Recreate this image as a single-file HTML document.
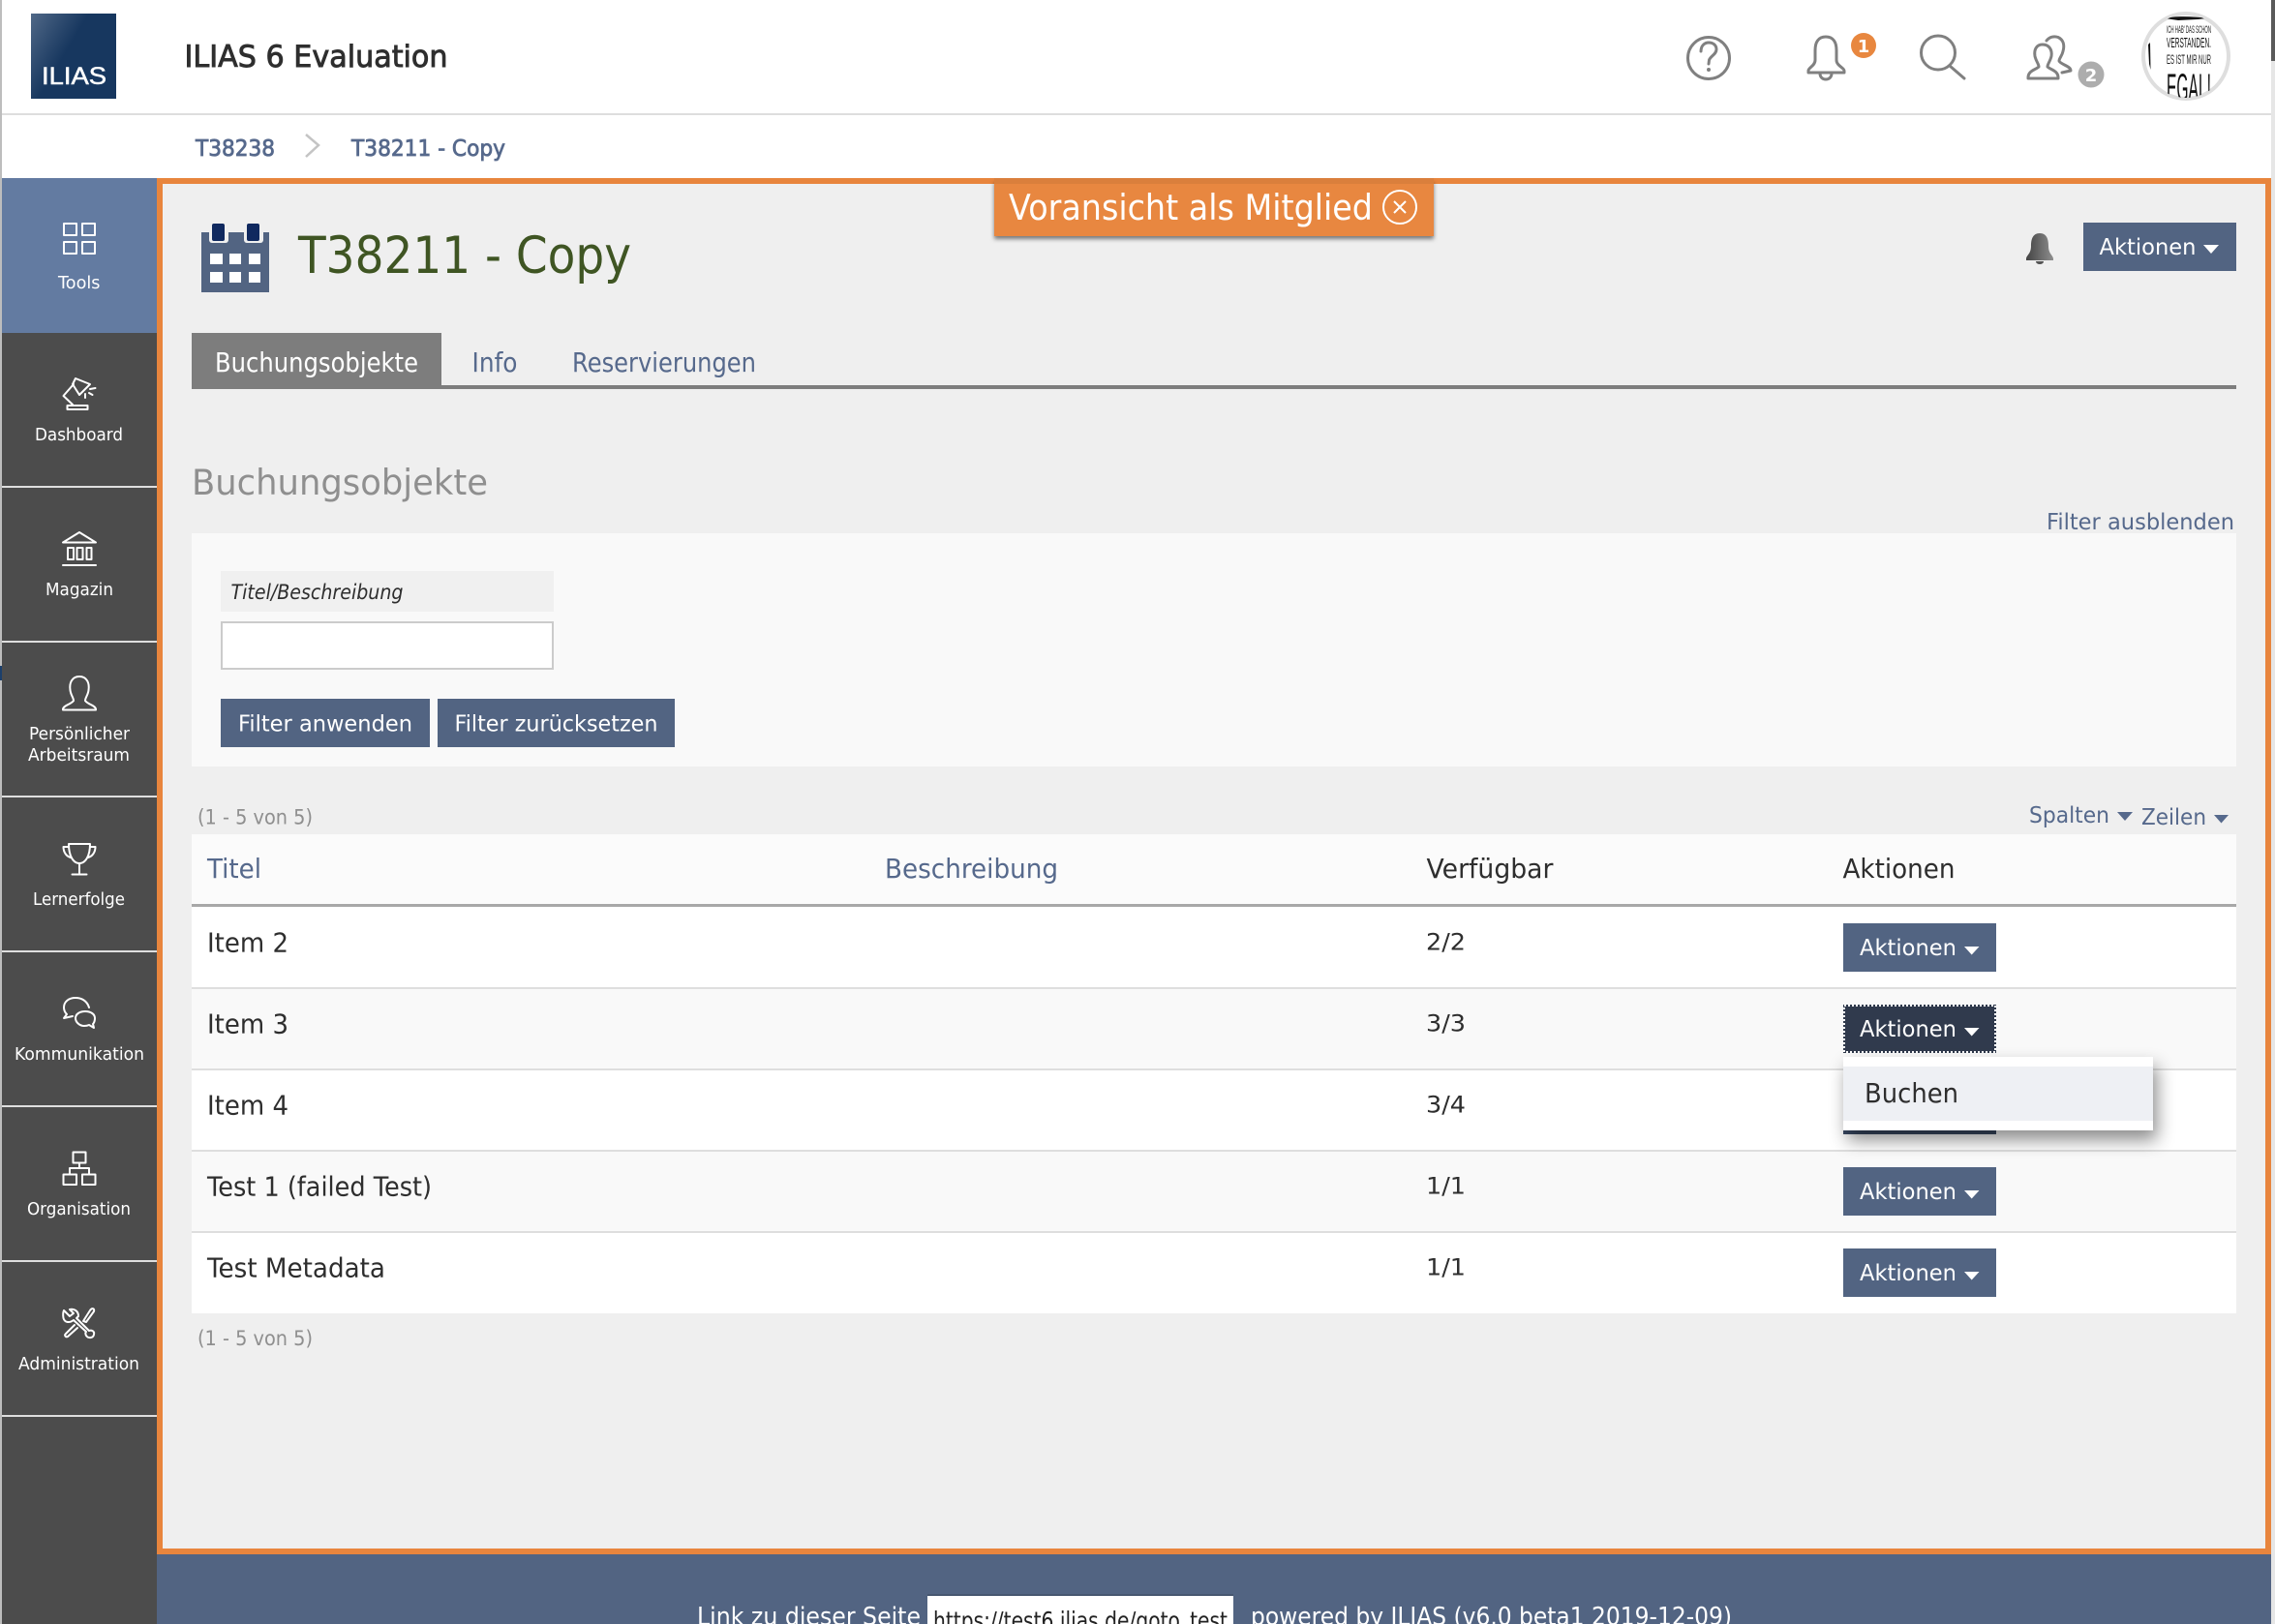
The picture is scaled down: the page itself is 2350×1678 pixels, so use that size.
<!DOCTYPE html>
<html lang="de"><head><meta charset="utf-8"><title>T38211 - Copy</title>
<style>
html,body{margin:0;padding:0;background:#fff;width:2350px;height:1678px;overflow:hidden}
svg{display:block}
text{font-family:"DejaVu Sans","Liberation Sans",sans-serif}
.nav{fill:#fff;font-size:17.5px}
.lnk{fill:#56698c;font-size:23.5px}
.btn{fill:#fff;font-size:23px}
.cell{fill:#2e2e2e;font-size:27.5px}
.val{fill:#2e2e2e;font-size:24px}
.ic{fill:none;stroke:#fff;stroke-width:2;stroke-linejoin:round;stroke-linecap:round}
.hd{fill:none;stroke:#808080;stroke-width:3;stroke-linejoin:round;stroke-linecap:round}
</style></head><body>
<svg xmlns="http://www.w3.org/2000/svg" width="2350" height="1678" viewBox="0 0 2350 1678">
<defs>
<linearGradient id="lg" x1="0" y1="0" x2="1" y2="0.6"><stop offset="0" stop-color="#506887"/><stop offset=".5" stop-color="#17375f"/><stop offset="1" stop-color="#17375f"/></linearGradient>
<linearGradient id="bg" x1="0" y1="0" x2="1" y2="0"><stop offset="0" stop-color="#444"/><stop offset="1" stop-color="#8e8e8e"/></linearGradient>
<filter id="ds" x="-20%" y="-40%" width="140%" height="200%"><feDropShadow dx="4" dy="10" stdDeviation="9" flood-color="#000" flood-opacity=".45"/></filter>
<filter id="ds2" x="-5%" y="-20%" width="110%" height="150%"><feDropShadow dx="0" dy="3" stdDeviation="2" flood-color="#000" flood-opacity=".5"/></filter>
<clipPath id="av"><circle cx="2258" cy="58" r="43"/></clipPath>
</defs>

<rect width="2350" height="1678" fill="#fff"/>
<rect x="0" y="0" width="2" height="1678" fill="#bdbdbd"/>

<!-- header -->
<rect x="32" y="14" width="88" height="88" fill="url(#lg)"/>
<text x="43" y="87" textLength="67" lengthAdjust="spacingAndGlyphs" style="font-family:'Liberation Sans',sans-serif;font-size:25px" fill="#fff" stroke="#fff" stroke-width=".5">ILIAS</text>
<text x="190.500" y="69" textLength="272" lengthAdjust="spacingAndGlyphs" font-size="31" fill="#2e2e2e" stroke="#2e2e2e" stroke-width=".9">ILIAS 6 Evaluation</text>
<rect x="2" y="117" width="2344" height="2" fill="#dedede"/>

<circle class="hd" cx="1765" cy="60" r="21.5"/>
<path class="hd" d="M1757 53C1757 47 1761 44 1765 44C1770 44 1773 47 1773 51C1773 56 1767 58 1765.500 62L1765 66"/>
<circle cx="1765" cy="72" r="2" fill="#808080"/>

<path class="hd" d="M1886 38C1878 38 1875 44 1875 52L1875 62C1875 68 1868 70 1868 73L1868 75L1905 75L1905 73C1905 70 1897 68 1897 62L1897 52C1897 44 1894 38 1886 38Z"/>
<path class="hd" d="M1880 76C1880 84 1892 84 1892 76"/>
<circle cx="1925" cy="47" r="13" fill="#e8873f"/>
<text x="1925" y="54" text-anchor="middle" font-size="18" font-weight="bold" fill="#fff">1</text>

<circle class="hd" cx="2002" cy="54.500" r="17.500"/>
<path class="hd" d="M2014 68L2029 81"/>

<path class="hd" d="M2110 46C2103 46 2101 52 2102 58C2103 63 2106 66 2106 69C2103 72 2095 73 2095 80L2095 81L2126 81L2126 80C2126 73 2118 72 2115 69C2115 66 2118 63 2119 58C2120 52 2117 46 2110 46Z"/>
<path class="hd" d="M2114 42C2117 38 2122 37 2126 38.500C2131 41 2133 46 2131 53C2130 58 2127 60 2127 63C2129 67 2139 68 2139 73L2130 75"/>
<circle cx="2160" cy="77" r="13.500" fill="#adadad"/>
<text x="2160" y="84" text-anchor="middle" font-size="18" font-weight="bold" fill="#fff">2</text>

<circle cx="2258" cy="58" r="44" fill="#fff" stroke="#dedede" stroke-width="4"/>
<g clip-path="url(#av)" fill="#111">
<path d="M2236 19C2245 16.500 2265 16.500 2280 19L2270 20L2250 21Z"/>
<path d="M2219 46L2221 44L2221.500 72L2220 66Z"/>
<text x="2238" y="34" textLength="46" lengthAdjust="spacingAndGlyphs" style="font-family:'Liberation Sans',sans-serif" font-size="11" fill="#222">ICH HAB' DAS SCHON</text>
<text x="2238" y="49" textLength="46" lengthAdjust="spacingAndGlyphs" style="font-family:'Liberation Sans',sans-serif" font-size="15">VERSTANDEN.</text>
<text x="2238" y="66" textLength="46" lengthAdjust="spacingAndGlyphs" style="font-family:'Liberation Sans',sans-serif" font-size="14" fill="#222">ES IST MIR NUR</text>
<text x="2238" y="104" textLength="46" lengthAdjust="spacingAndGlyphs" style="font-family:'Liberation Sans',sans-serif" font-size="40">EGAL!</text>
</g>

<!-- scrollbar sliver -->
<rect x="2346" y="0" width="4" height="63" fill="#5a5a5a"/>
<rect x="2346" y="63" width="4" height="1615" fill="#e6e6e6"/>

<!-- breadcrumb -->
<text x="202" y="161" textLength="82" lengthAdjust="spacingAndGlyphs" font-size="23.500" fill="#56698c" stroke="#56698c" stroke-width=".8">T38238</text>
<path d="M316 139L329 150L316 162" fill="none" stroke="#c4c4c4" stroke-width="2.500"/>
<text x="363" y="161" textLength="159" lengthAdjust="spacingAndGlyphs" font-size="23.500" fill="#56698c" stroke="#56698c" stroke-width=".8">T38211 - Copy</text>

<!-- sidebar -->
<rect x="2" y="184" width="160" height="1494" fill="#4c4c4c"/>
<rect x="2" y="184" width="160" height="160" fill="#637ba1"/>
<rect x="0" y="688" width="2" height="15" fill="#1c3f6b"/>
<g fill="#dedede">
<rect x="2" y="502" width="160" height="2"/><rect x="2" y="662" width="160" height="2"/><rect x="2" y="822" width="160" height="2"/><rect x="2" y="982" width="160" height="2"/><rect x="2" y="1142" width="160" height="2"/><rect x="2" y="1302" width="160" height="2"/><rect x="2" y="1462" width="160" height="2"/>
</g>

<g class="ic">
<rect x="66" y="231" width="13" height="12"/><rect x="85" y="231" width="13" height="12"/><rect x="66" y="250" width="13" height="12"/><rect x="85" y="250" width="13" height="12"/>
<path d="M78 391L93 397L82 408L75 397Z"/><path d="M76 397L65.500 409L75 418"/><rect x="69.500" y="419" width="21" height="4"/><path d="M93 402L98.500 401M92 406L95.500 408M88 407L88 411"/>
<path d="M65 560.500L82 550L99 560.500Z"/><rect x="70" y="566" width="6" height="12"/><rect x="79.500" y="566" width="6" height="12"/><rect x="89.500" y="566" width="5" height="12"/><path d="M65 584L99 584"/>
<path d="M82 699C74 699 71.500 706 72.500 713C73 718 76 721 76 724C73 728 65 729 65 733L65 733.500L99 733.500L99 733C99 729 91 728 88 724C88 721 91 718 91.500 713C92.500 706 90 699 82 699Z"/>
<path d="M71 872L93 872C93 885 88 892 82 892C76 892 71 885 71 872Z"/><path d="M71 875L65.500 875C65.500 881 69 885 73 886M93 875L98.500 875C98.500 881 95 885 91 886M82 892L82 902M74.500 903.500L89.500 903.500"/>
<path d="M92 1041C90 1034 84 1031 78 1031C71 1031 66 1035 66 1041C66 1044 67 1046 69 1048L66 1052L75 1050"/><path d="M88 1045C94 1045 98 1048 98 1052C98 1055 97 1057 96 1058L97 1062L92 1059C90 1060 88 1060 87 1060C82 1060 78 1056 78 1052C78 1048 82 1045 88 1045Z"/>
<rect x="75.500" y="1190.500" width="13" height="11"/><path d="M82 1202L82 1207M72 1213L72 1207L92 1207L92 1213"/><rect x="65.500" y="1213.500" width="13.500" height="10.500"/><rect x="85" y="1213.500" width="13.500" height="10.500"/>
<path d="M66 1354L72 1360L76 1357L72 1353C76 1352 81 1354 81 1360L79 1362L92 1375C94 1374 98 1375 97 1379C96 1383 91 1383 89 1380C88 1378 88 1377 89 1376L76 1364C72 1367 67 1367 65.500 1362C65 1359 65 1356 66 1354Z"/>
<path d="M86 1365L93 1354C95 1351 98 1352 97 1355L89 1366L86 1365ZM80 1372L70 1381C68 1382 66 1380 68 1378L77 1369"/>
</g>

<text class="nav" x="60" y="298" textLength="43.500" lengthAdjust="spacingAndGlyphs">Tools</text>
<text class="nav" x="36" y="455" textLength="91" lengthAdjust="spacingAndGlyphs">Dashboard</text>
<text class="nav" x="47" y="615" textLength="70" lengthAdjust="spacingAndGlyphs">Magazin</text>
<text class="nav" x="30" y="764" textLength="104" lengthAdjust="spacingAndGlyphs">Persönlicher</text>
<text class="nav" x="29" y="786" textLength="105" lengthAdjust="spacingAndGlyphs">Arbeitsraum</text>
<text class="nav" x="34" y="935" textLength="95" lengthAdjust="spacingAndGlyphs">Lernerfolge</text>
<text class="nav" x="15" y="1095" textLength="134" lengthAdjust="spacingAndGlyphs">Kommunikation</text>
<text class="nav" x="28" y="1255" textLength="107" lengthAdjust="spacingAndGlyphs">Organisation</text>
<text class="nav" x="19" y="1415" textLength="125" lengthAdjust="spacingAndGlyphs">Administration</text>

<!-- main -->
<rect x="162" y="184" width="2184" height="1422" fill="#e8853d"/>
<rect x="168" y="190" width="2172" height="1410" fill="#efefef"/>
<rect x="162" y="1606" width="2184" height="72" fill="#526482"/>

<!-- footer -->
<text x="720" y="1679" textLength="231" lengthAdjust="spacingAndGlyphs" font-size="25.500" fill="#fff">Link zu dieser Seite</text>
<rect x="958" y="1648" width="316" height="30" fill="#fff"/><rect x="958" y="1647" width="316" height="2" fill="#46566f"/>
<text x="964" y="1683" textLength="304" lengthAdjust="spacingAndGlyphs" font-size="24.500" fill="#222">https://test6.ilias.de/goto_test</text>
<text x="1292" y="1679" textLength="497" lengthAdjust="spacingAndGlyphs" font-size="25.500" fill="#fff">powered by ILIAS (v6.0 beta1 2019-12-09)</text>

<!-- banner -->
<rect x="1027" y="186" width="454" height="58" fill="#e8873f" filter="url(#ds2)"/>
<rect x="1027" y="184" width="454" height="6" fill="#da7f3c"/>
<text x="1042" y="227" textLength="376" lengthAdjust="spacingAndGlyphs" font-size="36.500" fill="#fff">Voransicht als Mitglied</text>
<circle cx="1446" cy="214" r="17" fill="none" stroke="#fff" stroke-width="2"/>
<path d="M1440 208L1452 220M1452 208L1440 220" stroke="#fff" stroke-width="2"/>

<!-- title -->
<rect x="208" y="240" width="70" height="62" fill="#526482"/>
<rect x="216" y="229" width="20" height="22" rx="3" fill="#efefef"/><rect x="252" y="229" width="20" height="22" rx="3" fill="#efefef"/>
<rect x="219" y="231" width="13" height="18" rx="2" fill="#10295f"/><rect x="255" y="231" width="13" height="18" rx="2" fill="#10295f"/>
<g fill="#fff"><rect x="217" y="262" width="13" height="11"/><rect x="237" y="262" width="12" height="11"/><rect x="257" y="262" width="12" height="11"/><rect x="217" y="281" width="13" height="11"/><rect x="237" y="281" width="12" height="11"/><rect x="257" y="281" width="12" height="11"/></g>
<text x="308" y="282" textLength="344" lengthAdjust="spacingAndGlyphs" font-size="52.500" fill="#3f5523">T38211 - Copy</text>

<path d="M2107 241C2100 241 2098 247 2098 254C2098 262 2094 263 2093 267L2093 269L2121 269L2121 267C2120 263 2116 262 2116 254C2116 247 2114 241 2107 241Z" fill="url(#bg)"/>
<path d="M2103 270C2103 274 2111 274 2111 270Z" fill="#555"/>
<rect x="2152" y="230" width="158" height="50" fill="#526482"/>
<text class="btn" x="2168.500" y="263" textLength="100" lengthAdjust="spacingAndGlyphs">Aktionen</text>
<path d="M2276 253H2292L2284 262Z" fill="#fff"/>

<!-- tabs -->
<rect x="198" y="398" width="2112" height="4" fill="#7d7d7d"/>
<rect x="198" y="344" width="258" height="58" fill="#7d7d7d"/>
<text x="222" y="384" textLength="210" lengthAdjust="spacingAndGlyphs" font-size="27.500" fill="#fff">Buchungsobjekte</text>
<text x="487.500" y="384" textLength="47" lengthAdjust="spacingAndGlyphs" font-size="27.500" fill="#56698c">Info</text>
<text x="591" y="384" textLength="190" lengthAdjust="spacingAndGlyphs" font-size="27.500" fill="#56698c">Reservierungen</text>

<text x="198" y="511" textLength="306" lengthAdjust="spacingAndGlyphs" font-size="36.500" fill="#8f8f8f">Buchungsobjekte</text>
<rect x="198" y="551" width="2112" height="241" fill="#f9f9f9"/>
<text class="lnk" x="2114" y="547" textLength="194" lengthAdjust="spacingAndGlyphs">Filter ausblenden</text>

<rect x="228" y="590" width="344" height="42" fill="#f0f0f0"/>
<text x="238.500" y="619" textLength="178" lengthAdjust="spacingAndGlyphs" font-size="21.500" font-style="italic" fill="#2e2e2e">Titel/Beschreibung</text>
<rect x="229" y="643" width="342" height="48" fill="#fff" stroke="#cbcbcb" stroke-width="2"/>
<rect x="228" y="722" width="216" height="50" fill="#526482"/>
<rect x="452" y="722" width="245" height="50" fill="#526482"/>
<text class="btn" x="246" y="755.500" textLength="180" lengthAdjust="spacingAndGlyphs">Filter anwenden</text>
<text class="btn" x="469.500" y="755.500" textLength="210" lengthAdjust="spacingAndGlyphs">Filter zurücksetzen</text>

<text x="204" y="851.500" textLength="119" lengthAdjust="spacingAndGlyphs" font-size="21.500" fill="#8f8f8f">(1 - 5 von 5)</text>
<text class="lnk" x="2096" y="850" textLength="83" lengthAdjust="spacingAndGlyphs">Spalten</text>
<path d="M2187 839H2203L2195 848Z" fill="#56698c"/>
<text class="lnk" x="2212" y="852" textLength="67" lengthAdjust="spacingAndGlyphs">Zeilen</text>
<path d="M2287 842H2302L2294.500 850.500Z" fill="#56698c"/>

<!-- table -->
<rect x="198" y="862" width="2112" height="72" fill="#fbfbfb"/>
<rect x="198" y="934" width="2112" height="3" fill="#a8a8a8"/>
<rect x="198" y="937" width="2112" height="83" fill="#fff"/>
<rect x="198" y="1020" width="2112" height="2" fill="#dedede"/>
<rect x="198" y="1022" width="2112" height="82" fill="#f9f9f9"/>
<rect x="198" y="1104" width="2112" height="2" fill="#dedede"/>
<rect x="198" y="1106" width="2112" height="82" fill="#fff"/>
<rect x="198" y="1188" width="2112" height="2" fill="#dedede"/>
<rect x="198" y="1190" width="2112" height="82" fill="#f9f9f9"/>
<rect x="198" y="1272" width="2112" height="2" fill="#dedede"/>
<rect x="198" y="1274" width="2112" height="83" fill="#fff"/>

<text x="214" y="907" textLength="56" lengthAdjust="spacingAndGlyphs" font-size="27.500" fill="#56698c">Titel</text>
<text x="914" y="907" textLength="179" lengthAdjust="spacingAndGlyphs" font-size="27.500" fill="#56698c">Beschreibung</text>
<text class="cell" x="1473.500" y="907" textLength="131" lengthAdjust="spacingAndGlyphs">Verfügbar</text>
<text class="cell" x="1903.500" y="907" textLength="116" lengthAdjust="spacingAndGlyphs">Aktionen</text>

<text class="cell" x="214" y="983.500" textLength="84" lengthAdjust="spacingAndGlyphs">Item 2</text>
<text class="cell" x="214" y="1067.500" textLength="84" lengthAdjust="spacingAndGlyphs">Item 3</text>
<text class="cell" x="214" y="1151.500" textLength="84" lengthAdjust="spacingAndGlyphs">Item 4</text>
<text class="cell" x="214" y="1235.500" textLength="232" lengthAdjust="spacingAndGlyphs">Test 1 (failed Test)</text>
<text class="cell" x="214" y="1319.500" textLength="184" lengthAdjust="spacingAndGlyphs">Test Metadata</text>
<text class="val" x="1473" y="981.500" textLength="41" lengthAdjust="spacingAndGlyphs">2/2</text>
<text class="val" x="1473" y="1065.500" textLength="41" lengthAdjust="spacingAndGlyphs">3/3</text>
<text class="val" x="1473" y="1149.500" textLength="41" lengthAdjust="spacingAndGlyphs">3/4</text>
<text class="val" x="1473" y="1233.500" textLength="41" lengthAdjust="spacingAndGlyphs">1/1</text>
<text class="val" x="1473" y="1317.500" textLength="41" lengthAdjust="spacingAndGlyphs">1/1</text>

<rect x="1904" y="954" width="158" height="50" fill="#526482"/>
<text class="btn" x="1921" y="987" textLength="100" lengthAdjust="spacingAndGlyphs">Aktionen</text>
<path d="M2029 978H2044.500L2036.700 986.500Z" fill="#fff"/>

<rect x="1904" y="1038" width="158" height="50" fill="#303a4d"/>
<rect x="1905" y="1039" width="156" height="48" fill="none" stroke="#fff" stroke-width="2" stroke-dasharray="2 2"/>
<text class="btn" x="1921" y="1071" textLength="100" lengthAdjust="spacingAndGlyphs">Aktionen</text>
<path d="M2029 1062H2044.500L2036.700 1070.500Z" fill="#fff"/>

<rect x="1904" y="1122" width="158" height="50" fill="#3a4a64"/>

<rect x="1904" y="1206" width="158" height="50" fill="#526482"/>
<text class="btn" x="1921" y="1239" textLength="100" lengthAdjust="spacingAndGlyphs">Aktionen</text>
<path d="M2029 1230H2044.500L2036.700 1238.500Z" fill="#fff"/>

<rect x="1904" y="1290" width="158" height="50" fill="#526482"/>
<text class="btn" x="1921" y="1323" textLength="100" lengthAdjust="spacingAndGlyphs">Aktionen</text>
<path d="M2029 1314H2044.500L2036.700 1322.500Z" fill="#fff"/>

<rect x="1904" y="1092" width="320" height="76" fill="#fff" filter="url(#ds)"/>
<rect x="1904" y="1102" width="320" height="56" fill="#eef0f4"/>
<text class="cell" x="1926" y="1139" textLength="97" lengthAdjust="spacingAndGlyphs">Buchen</text>

<text x="204" y="1390" textLength="119" lengthAdjust="spacingAndGlyphs" font-size="21.500" fill="#8f8f8f">(1 - 5 von 5)</text>
</svg>
</body></html>
